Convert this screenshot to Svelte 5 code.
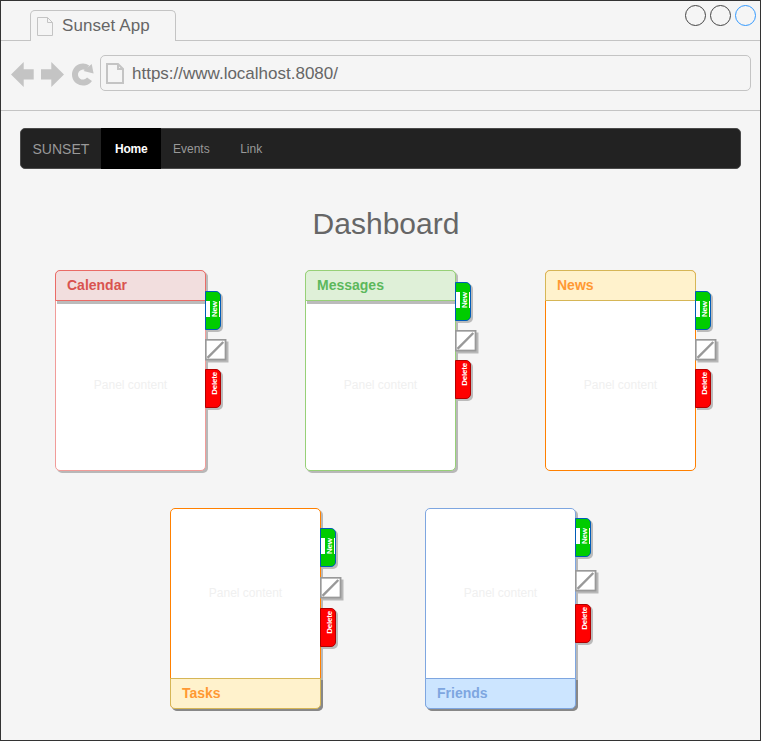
<script>
  const rows = [
    [
      { title: 'Calendar', kind: 'red', gap: 0, tabs: [21, 9, 6] },
      { title: 'Messages', kind: 'green', gap: 99, tabs: [12, 9, 6] },
      { title: 'News', kind: 'yellow', gap: 89, tabs: [21, 9, 6] }
    ],
    [
      { title: 'Tasks', kind: 'tasks', gap: 0, footer: true, tabs: [20, 10, 7] },
      { title: 'Friends', kind: 'blue', gap: 104, footer: true, tabs: [10, 13, 10] }
    ]
  ];
</script>

<div class="window">
  <header>
    <div class="tabbar">
      <div class="tab">
        <svg width="16" height="20" viewBox="0 0 16 20"><path d="M.5 1.500H10.500L15.500 6.500V19.500H.5ZM10.500 1.500V6.500H15.500" /></svg>
        <span>Sunset App</span>
      </div>
      <svg class="circles" width="72" height="24" viewBox="0 0 72 24">
        <circle cx="10.500" cy="11.500" r="10" stroke="#444" />
        <circle cx="35.500" cy="11.500" r="10" stroke="#444" />
        <circle cx="60.500" cy="11.500" r="10" stroke="#3399ff" />
      </svg>
    </div>
    <div class="toolbar">
      <svg class="nav" width="85" height="30" viewBox="0 0 85 30">
        <path d="M0 14.500 12.700 2V9.300H22.700V19.500H12.700V27Z" />
        <path d="M53 14.500 40.300 2V9.300H30V19.500H40.300V27Z" />
        <path d="M78.500 19.200A8 8 0 1 1 76.500 8" class="ring" />
        <path d="M80.700 4 82.600 13.600 72.500 11Z" />
      </svg>
      <div class="url">
        <svg width="18" height="21" viewBox="0 0 18 21"><path d="M1 1H12L17 6V20H1ZM12 1V6H17" stroke-width="2" /></svg>
        <span>https://www.localhost.8080/</span>
      </div>
    </div>
  </header>

  <nav>
    <span class="brand">SUNSET</span>
    <span class="home">Home</span>
    <span class="link">Events</span>
    <span class="link second">Link</span>
  </nav>

  <h1>Dashboard</h1>

  {#each rows as row, i}
    <div class="row" class:lower={i === 1}>
      {#each row as p}
        <section style:margin-left="{p.gap}px">
          <div class="panel {p.kind}" class:footer={p.footer}>
            <div class="title">{p.title}</div>
            <div class="content">Panel content</div>
          </div>
          <div class="side">
            <div class="action new" style:margin-top="{p.tabs[0]}px"><span>New</span></div>
            <svg class="edit" style:margin-top="{p.tabs[1]}px" width="24" height="24" viewBox="0 0 24 24">
              <path d="M2.500 2.500H23.500V23.500H2.500Z" fill="#b8b8b8" />
              <rect x=".75" y=".75" width="19.800" height="19.800" fill="#fff" stroke="#999" stroke-width="1.800" />
              <path d="M2.500 18.800 18.300 3" stroke="#999" stroke-width="2.400" />
            </svg>
            <div class="action delete" style:margin-top="{p.tabs[2]}px"><span>Delete</span></div>
          </div>
        </section>
      {/each}
    </div>
  {/each}
</div>

<style>
  .window {
    box-sizing: border-box;
    width: 761px;
    height: 741px;
    border: 1px solid #333;
    background: #f5f5f5;
    font-family: "Liberation Sans", Arial, sans-serif;
    overflow: hidden;
  }
  header { height: 109px; border-bottom: 1px solid #c4c4c4; }
  .tabbar {
    height: 39px;
    border-bottom: 1px solid #c4c4c4;
    display: flex;
    align-items: flex-end;
    padding: 0 3px 0 29px;
    justify-content: space-between;
  }
  .tab {
    box-sizing: border-box;
    width: 146px;
    height: 31px;
    margin-bottom: -1px;
    background: #f5f5f5;
    border: 1px solid #c4c4c4;
    border-bottom: 0;
    border-radius: 5px 5px 0 0;
    display: flex;
    padding: 5px 0 0 6px;
    font-size: 17px;
    line-height: 20px;
    color: #666;
  }
  .tab span { margin-left: 9px; letter-spacing: .08px; }
  .tab svg, .url svg { fill: none; stroke: #c4c4c4; }
  .circles { fill: none; align-self: flex-start; margin-top: 3px; }
  .toolbar { display: flex; padding: 14px 9px 0 10px; }
  .nav { fill: #c4c4c4; margin-top: 5px; }
  .ring { fill: none; stroke: #c4c4c4; stroke-width: 6; }
  .url {
    box-sizing: border-box;
    width: 651px;
    height: 36px;
    margin-left: 4px;
    border: 1px solid #c4c4c4;
    border-radius: 5px;
    display: flex;
    align-items: center;
    padding: 0 5px;
    font-size: 17px;
    color: #666;
  }
  .url span { margin-left: 8px; padding-top: 2px; }
  nav {
    box-sizing: border-box;
    display: flex;
    width: 721px;
    height: 41px;
    margin: 17px 0 0 19px;
    line-height: 41px;
    border: 1px solid #4a4a4a;
    border-radius: 5px;
    background: #222;
    color: #999;
    font-size: 12px;
  }
  .brand { width: 68px; padding-left: 11.500px; font-size: 14px; }
  .home {
    width: 60px;
    margin: -1px 0;
    line-height: 43px;
    background: #000;
    color: #fff;
    font-weight: bold;
    text-align: center;
    text-indent: 1.500px;
    letter-spacing: -.2px;
  }
  .link { margin-left: 12.500px; }
  .second { margin-left: 30.500px; }
  h1 {
    margin: 35px 0 0 11px;
    height: 40px;
    font-weight: normal;
    font-size: 30px;
    line-height: 40px;
    text-align: center;
    color: #666;
  }
  .row { display: flex; padding: 26px 0 0 54px; }
  .row.lower { padding: 37px 0 0 169px; }
  section { display: flex; height: 201px; width: 151px; flex: none; }
  .panel {
    box-sizing: border-box;
    width: 151px;
    height: 201px;
    flex: none;
    border: 1px solid var(--line);
    border-radius: 5px;
    background: #fff;
    display: flex;
    flex-direction: column;
    box-shadow: 2px 2px 0 #b8b8b8;
  }
  .title {
    box-sizing: border-box;
    flex: none;
    height: 31px;
    margin: -1px -1px 0;
    border: 1px solid var(--head);
    border-radius: 5px 5px 0 0;
    padding-left: 11px;
    font-size: 14px;
    font-weight: bold;
    line-height: 29px;
    color: var(--text);
    background: var(--fill);
    box-shadow: 2px 3px 0 #bbb;
  }
  .content {
    flex: 1;
    display: flex;
    align-items: center;
    justify-content: center;
    padding-bottom: 2px;
    font-size: 12px;
    color: #f0f0f0;
  }
  .footer { flex-direction: column-reverse; }
  .footer .title { margin: 0 -1px -1px; border-radius: 0 0 5px 5px; box-shadow: 2px 2px 0 #888; }
  .red { --line: #f19c99; --head: #ea6b66; --fill: #f2dede; --text: #d9534f; }
  .green { --line: #97d077; --head: #97d077; --fill: #dff0d8; --text: #5cb85c; }
  .yellow { --line: #ff8000; --head: #d6b656; --fill: #fff2cc; --text: #ff9933; box-shadow: none; }
  .yellow .title { box-shadow: none; }
  .tasks { --line: #ff8000; --head: #d6b656; --fill: #fff2cc; --text: #ff9933; }
  .blue { --line: #7ea6e0; --head: #7ea6e0; --fill: #cce5ff; --text: #7ea6e0; }
  .side { position: relative; width: 24px; flex: none; margin-left: -1px; }
  .action {
    box-sizing: border-box;
    width: 16px;
    height: 39px;
    border: 1px solid #b20000;
    border-radius: 0 5px 5px 0;
    background: #f00;
    box-shadow: 2px 2px 0 #bbb;
    color: #fff;
    font-size: 8px;
    font-weight: bold;
    line-height: 8px;
  }
  .action span { display: block; writing-mode: vertical-rl; transform: rotate(180deg); }
  .delete span { margin: 2px 0 0 5px; width: 8px; letter-spacing: -.2px; }
  .new { background: #0c0; border-color: #005cb8; padding-top: 9px; }
  .new span {
    box-sizing: border-box;
    width: 14px;
    height: 16px;
    line-height: 9px;
    letter-spacing: -.2px;
    background: #0c0;
    border-left: 1px solid #fff;
    border-right: 4px solid #fff;
  }
  .edit { display: block; }
</style>
